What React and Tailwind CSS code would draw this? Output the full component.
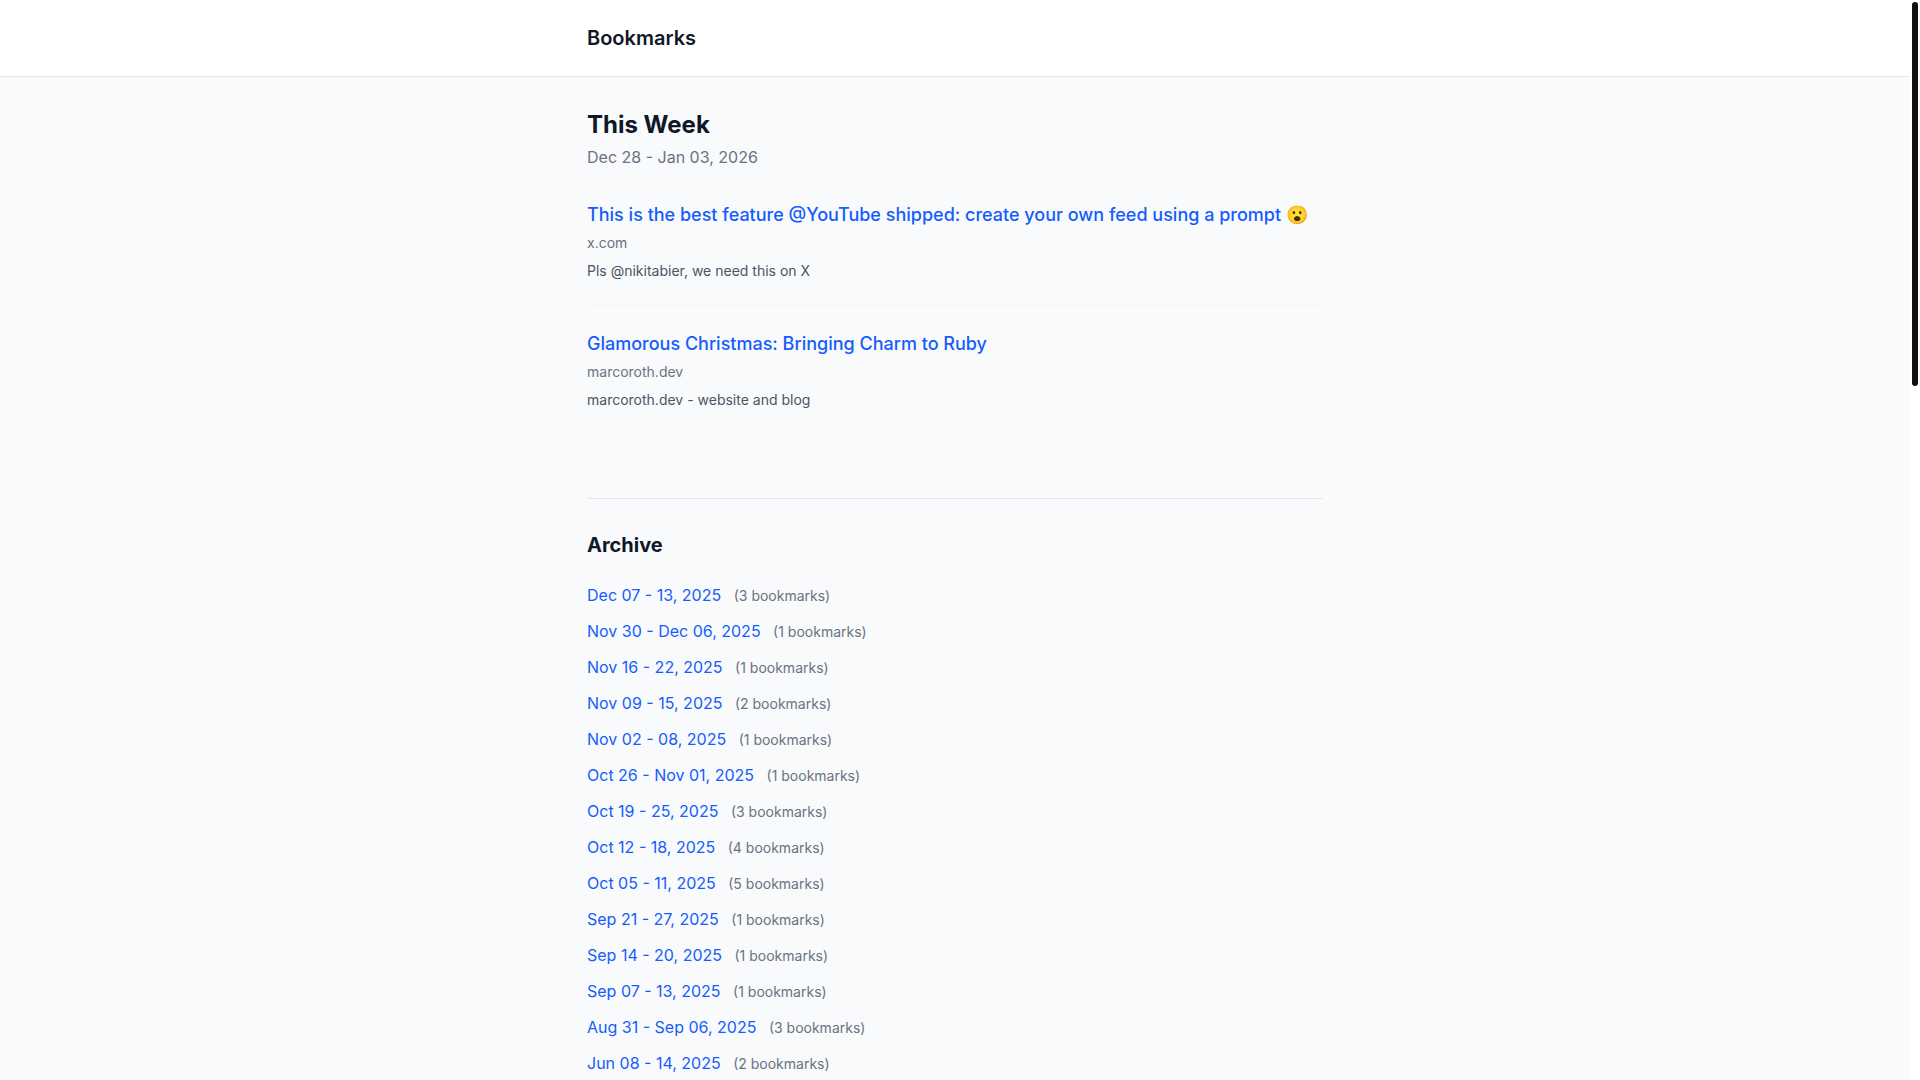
const bookmarks = [
  {
    title: 'This is the best feature @YouTube shipped: create your own feed using a prompt 😮',
    site: 'x.com',
    note: 'Pls @nikitabier, we need this on X',
  },
  {
    title: 'Glamorous Christmas: Bringing Charm to Ruby',
    site: 'marcoroth.dev',
    note: 'marcoroth.dev - website and blog',
  },
];

const weeks = [
  ['Dec 07 - 13, 2025', 3],
  ['Nov 30 - Dec 06, 2025', 1],
  ['Nov 16 - 22, 2025', 1],
  ['Nov 09 - 15, 2025', 2],
  ['Nov 02 - 08, 2025', 1],
  ['Oct 26 - Nov 01, 2025', 1],
  ['Oct 19 - 25, 2025', 3],
  ['Oct 12 - 18, 2025', 4],
  ['Oct 05 - 11, 2025', 5],
  ['Sep 21 - 27, 2025', 1],
  ['Sep 14 - 20, 2025', 1],
  ['Sep 07 - 13, 2025', 1],
  ['Aug 31 - Sep 06, 2025', 3],
  ['Jun 08 - 14, 2025', 2],
];

export default function App() {
  return (
    <div className="flex h-screen overflow-hidden bg-gray-50 font-['Inter',sans-serif] text-gray-900 antialiased">
      <div className="min-w-0 flex-1">
        <header className="border-b border-gray-200 bg-white">
          <div className="mx-auto max-w-3xl px-4 py-6">
            <a href="#" className="text-xl font-semibold text-gray-900">Bookmarks</a>
          </div>
        </header>
        <main className="mx-auto max-w-3xl px-4 py-8">
          <h1 className="text-2xl font-bold">This Week</h1>
          <p className="mt-1 text-base text-gray-500">Dec 28 - Jan 03, 2026</p>
          <div className="mt-8">
            {bookmarks.map((b) => (
              <article key={b.title} className="mb-6 border-b border-gray-100 pb-6 last:border-0">
                <h2 className="text-lg font-medium">
                  <a href="#" className="text-blue-600">{b.title}</a>
                </h2>
                <p className="mt-1 text-sm text-gray-500">{b.site}</p>
                <p className="mt-2 text-sm text-gray-600">{b.note}</p>
              </article>
            ))}
          </div>
          <section className="mt-16 border-t border-gray-200 pt-8">
            <h2 className="mb-6 text-xl font-bold">Archive</h2>
            <ul className="space-y-3">
              {weeks.map(([range, count]) => (
                <li key={range}>
                  <a href="#" className="text-blue-600">{range}</a>
                  <span className="ml-2"> </span>
                  <span className="text-sm text-gray-500">({count} bookmarks)</span>
                </li>
              ))}
            </ul>
          </section>
        </main>
      </div>
      <div className="w-2.5 shrink-0 bg-white p-0.5">
        <div className="h-96 rounded-full bg-[#111111]" />
      </div>
    </div>
  );
}
